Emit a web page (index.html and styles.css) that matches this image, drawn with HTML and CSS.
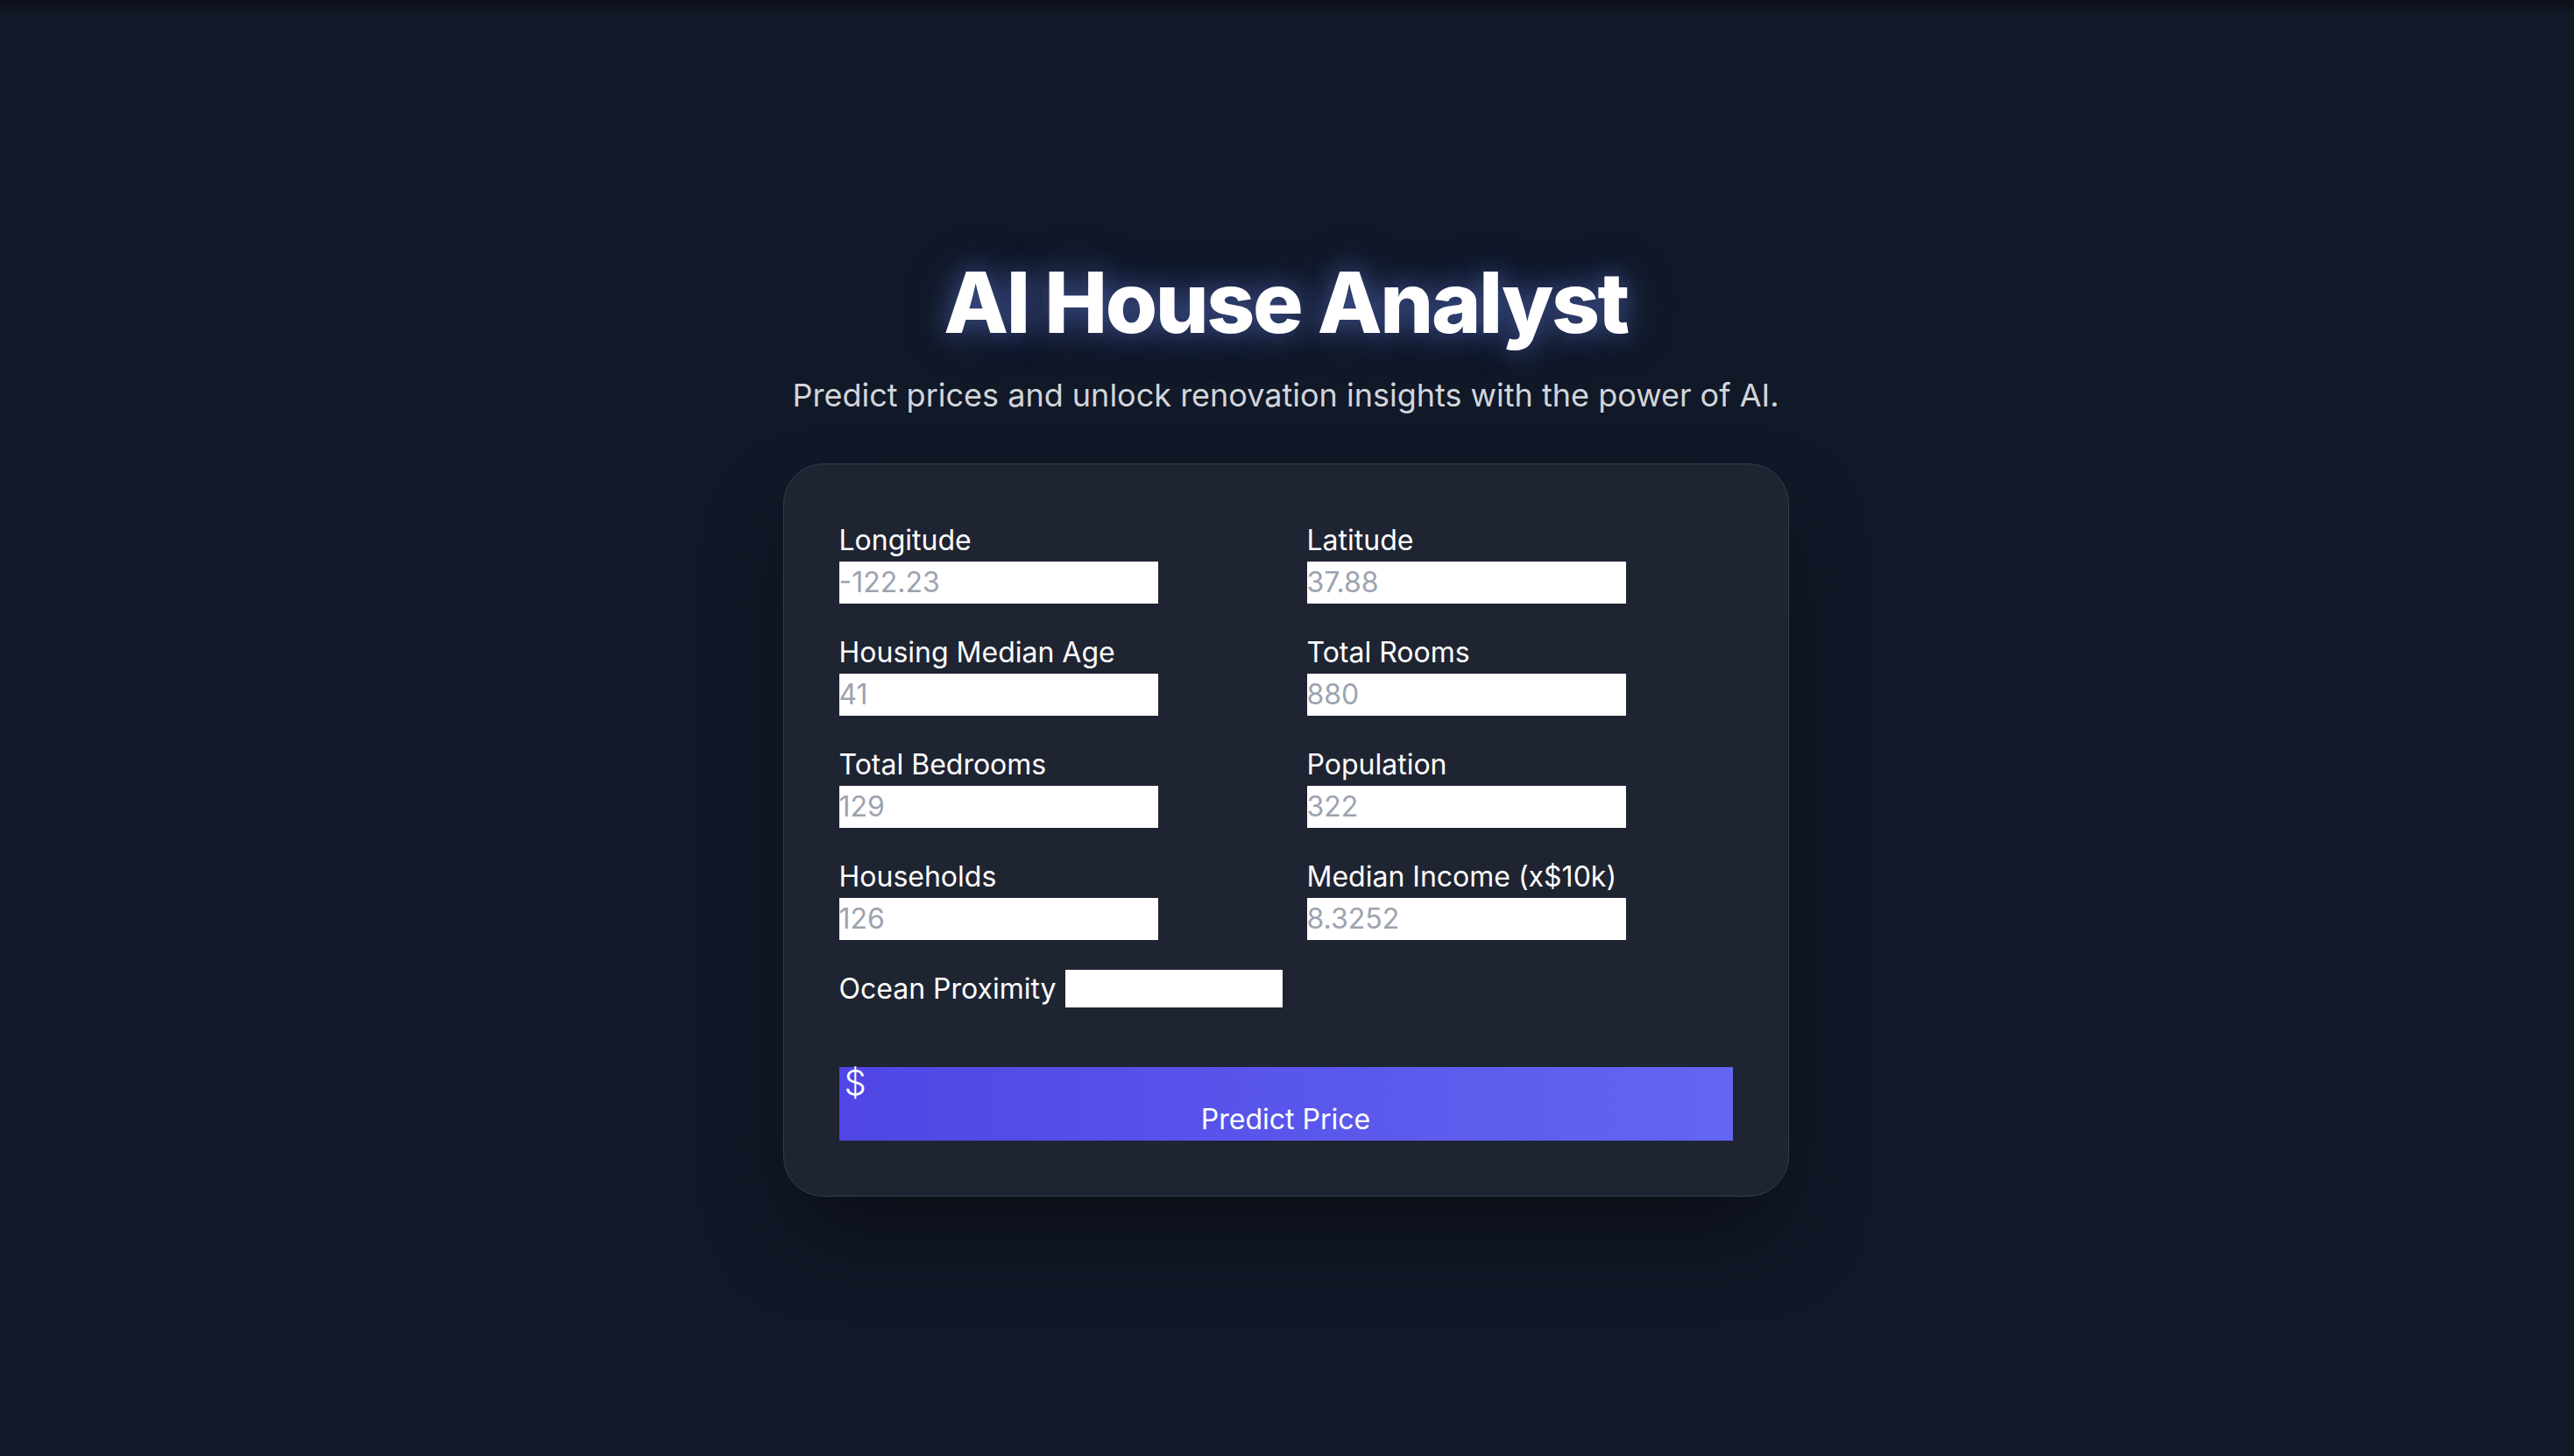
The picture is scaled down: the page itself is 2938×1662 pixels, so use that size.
FILE: index.html
```html
<!DOCTYPE html>
<html lang="en">
<head>
<meta charset="utf-8">
<title>AI House Analyst</title>
<link rel="stylesheet" href="styles.css">
</head>
<body>
<main class="page">
  <h1 class="title">AI House Analyst</h1>
  <p class="subtitle">Predict prices and unlock renovation insights with the power of AI.</p>
  <form class="card">
    <div class="grid">
      <div class="field">
        <label class="label" for="longitude">Longitude</label>
        <input class="input" id="longitude" type="text" placeholder="-122.23">
      </div>
      <div class="field">
        <label class="label" for="latitude">Latitude</label>
        <input class="input" id="latitude" type="text" placeholder="37.88">
      </div>
      <div class="field">
        <label class="label" for="age">Housing Median Age</label>
        <input class="input" id="age" type="text" placeholder="41">
      </div>
      <div class="field">
        <label class="label" for="rooms">Total Rooms</label>
        <input class="input" id="rooms" type="text" placeholder="880">
      </div>
      <div class="field">
        <label class="label" for="bedrooms">Total Bedrooms</label>
        <input class="input" id="bedrooms" type="text" placeholder="129">
      </div>
      <div class="field">
        <label class="label" for="population">Population</label>
        <input class="input" id="population" type="text" placeholder="322">
      </div>
      <div class="field">
        <label class="label" for="households">Households</label>
        <input class="input" id="households" type="text" placeholder="126">
      </div>
      <div class="field">
        <label class="label" for="income">Median Income (x$10k)</label>
        <input class="input" id="income" type="text" placeholder="8.3252">
      </div>
      <div class="field-inline">
        <label class="label-inline" for="ocean">Ocean Proximity</label>
        <span class="select" id="ocean"></span>
      </div>
    </div>
    <button type="button" class="predict">
      <span class="predict-icon">$</span>
      <span class="predict-text">Predict Price</span>
    </button>
  </form>
</main>
</body>
</html>
```

FILE: styles.css
```css
* {
  box-sizing: border-box;
}

html, body {
  margin: 0;
  padding: 0;
}

body {
  background: linear-gradient(to bottom, #0c1019 0, #111827 18px) no-repeat, #111827;
  background-color: #111827;
  color: #ffffff;
  font-family: Inter, "Noto Sans", "Liberation Sans", sans-serif;
}

.page {
  min-height: 100vh;
  padding-right: 3px;
  display: flex;
  flex-direction: column;
  align-items: center;
  justify-content: center;
}

.title {
  margin: 0 0 30px;
  font-size: 96px;
  line-height: 96px;
  font-weight: 800;
  letter-spacing: -0.025em;
  color: #ffffff;
  text-shadow: 0 0 30px rgba(120, 150, 255, 0.45), 0 0 60px rgba(90, 120, 240, 0.25);
}

.subtitle {
  margin: 0 0 50px;
  font-size: 36px;
  line-height: 56px;
  color: #d1d5db;
}

.card {
  width: 1148px;
  padding: 63px;
  background: #1f2432;
  border: 1px solid #353c4a;
  border-radius: 46px;
  box-shadow: 0 50px 100px -24px rgba(0, 0, 0, 0.55);
}

.grid {
  display: grid;
  grid-template-columns: 1fr 1fr;
  column-gap: 48px;
  row-gap: 32px;
}

.field {
  display: flex;
  flex-direction: column;
  align-items: flex-start;
}

.label {
  font-size: 32px;
  line-height: 48px;
  color: #ffffff;
}

.input {
  width: 364px;
  height: 48px;
  padding: 0;
  margin: 0;
  border: 0;
  border-radius: 0;
  background: #ffffff;
  font-family: inherit;
  font-size: 32px;
  line-height: 48px;
  color: #111827;
  outline: none;
}

.input::placeholder {
  color: #9ca3af;
}

.field-inline {
  grid-column: span 2;
  display: flex;
  align-items: center;
  gap: 10px;
  height: 48px;
}

.label-inline {
  font-size: 32px;
  line-height: 48px;
  color: #ffffff;
}

.select {
  display: block;
  width: 248px;
  height: 43px;
  background: #ffffff;
}

.predict {
  display: block;
  width: 100%;
  margin: 65px 0 0;
  padding: 0;
  border: 0;
  border-radius: 0;
  background: linear-gradient(to right, #4f46e5, #6366f1);
  color: #ffffff;
  font-family: inherit;
  cursor: pointer;
}

.predict-icon {
  display: block;
  text-align: left;
  padding-left: 6px;
  font-size: 40px;
  font-weight: 300;
  line-height: 36px;
}

.predict-text {
  display: block;
  text-align: center;
  font-size: 32px;
  line-height: 48px;
}
```
